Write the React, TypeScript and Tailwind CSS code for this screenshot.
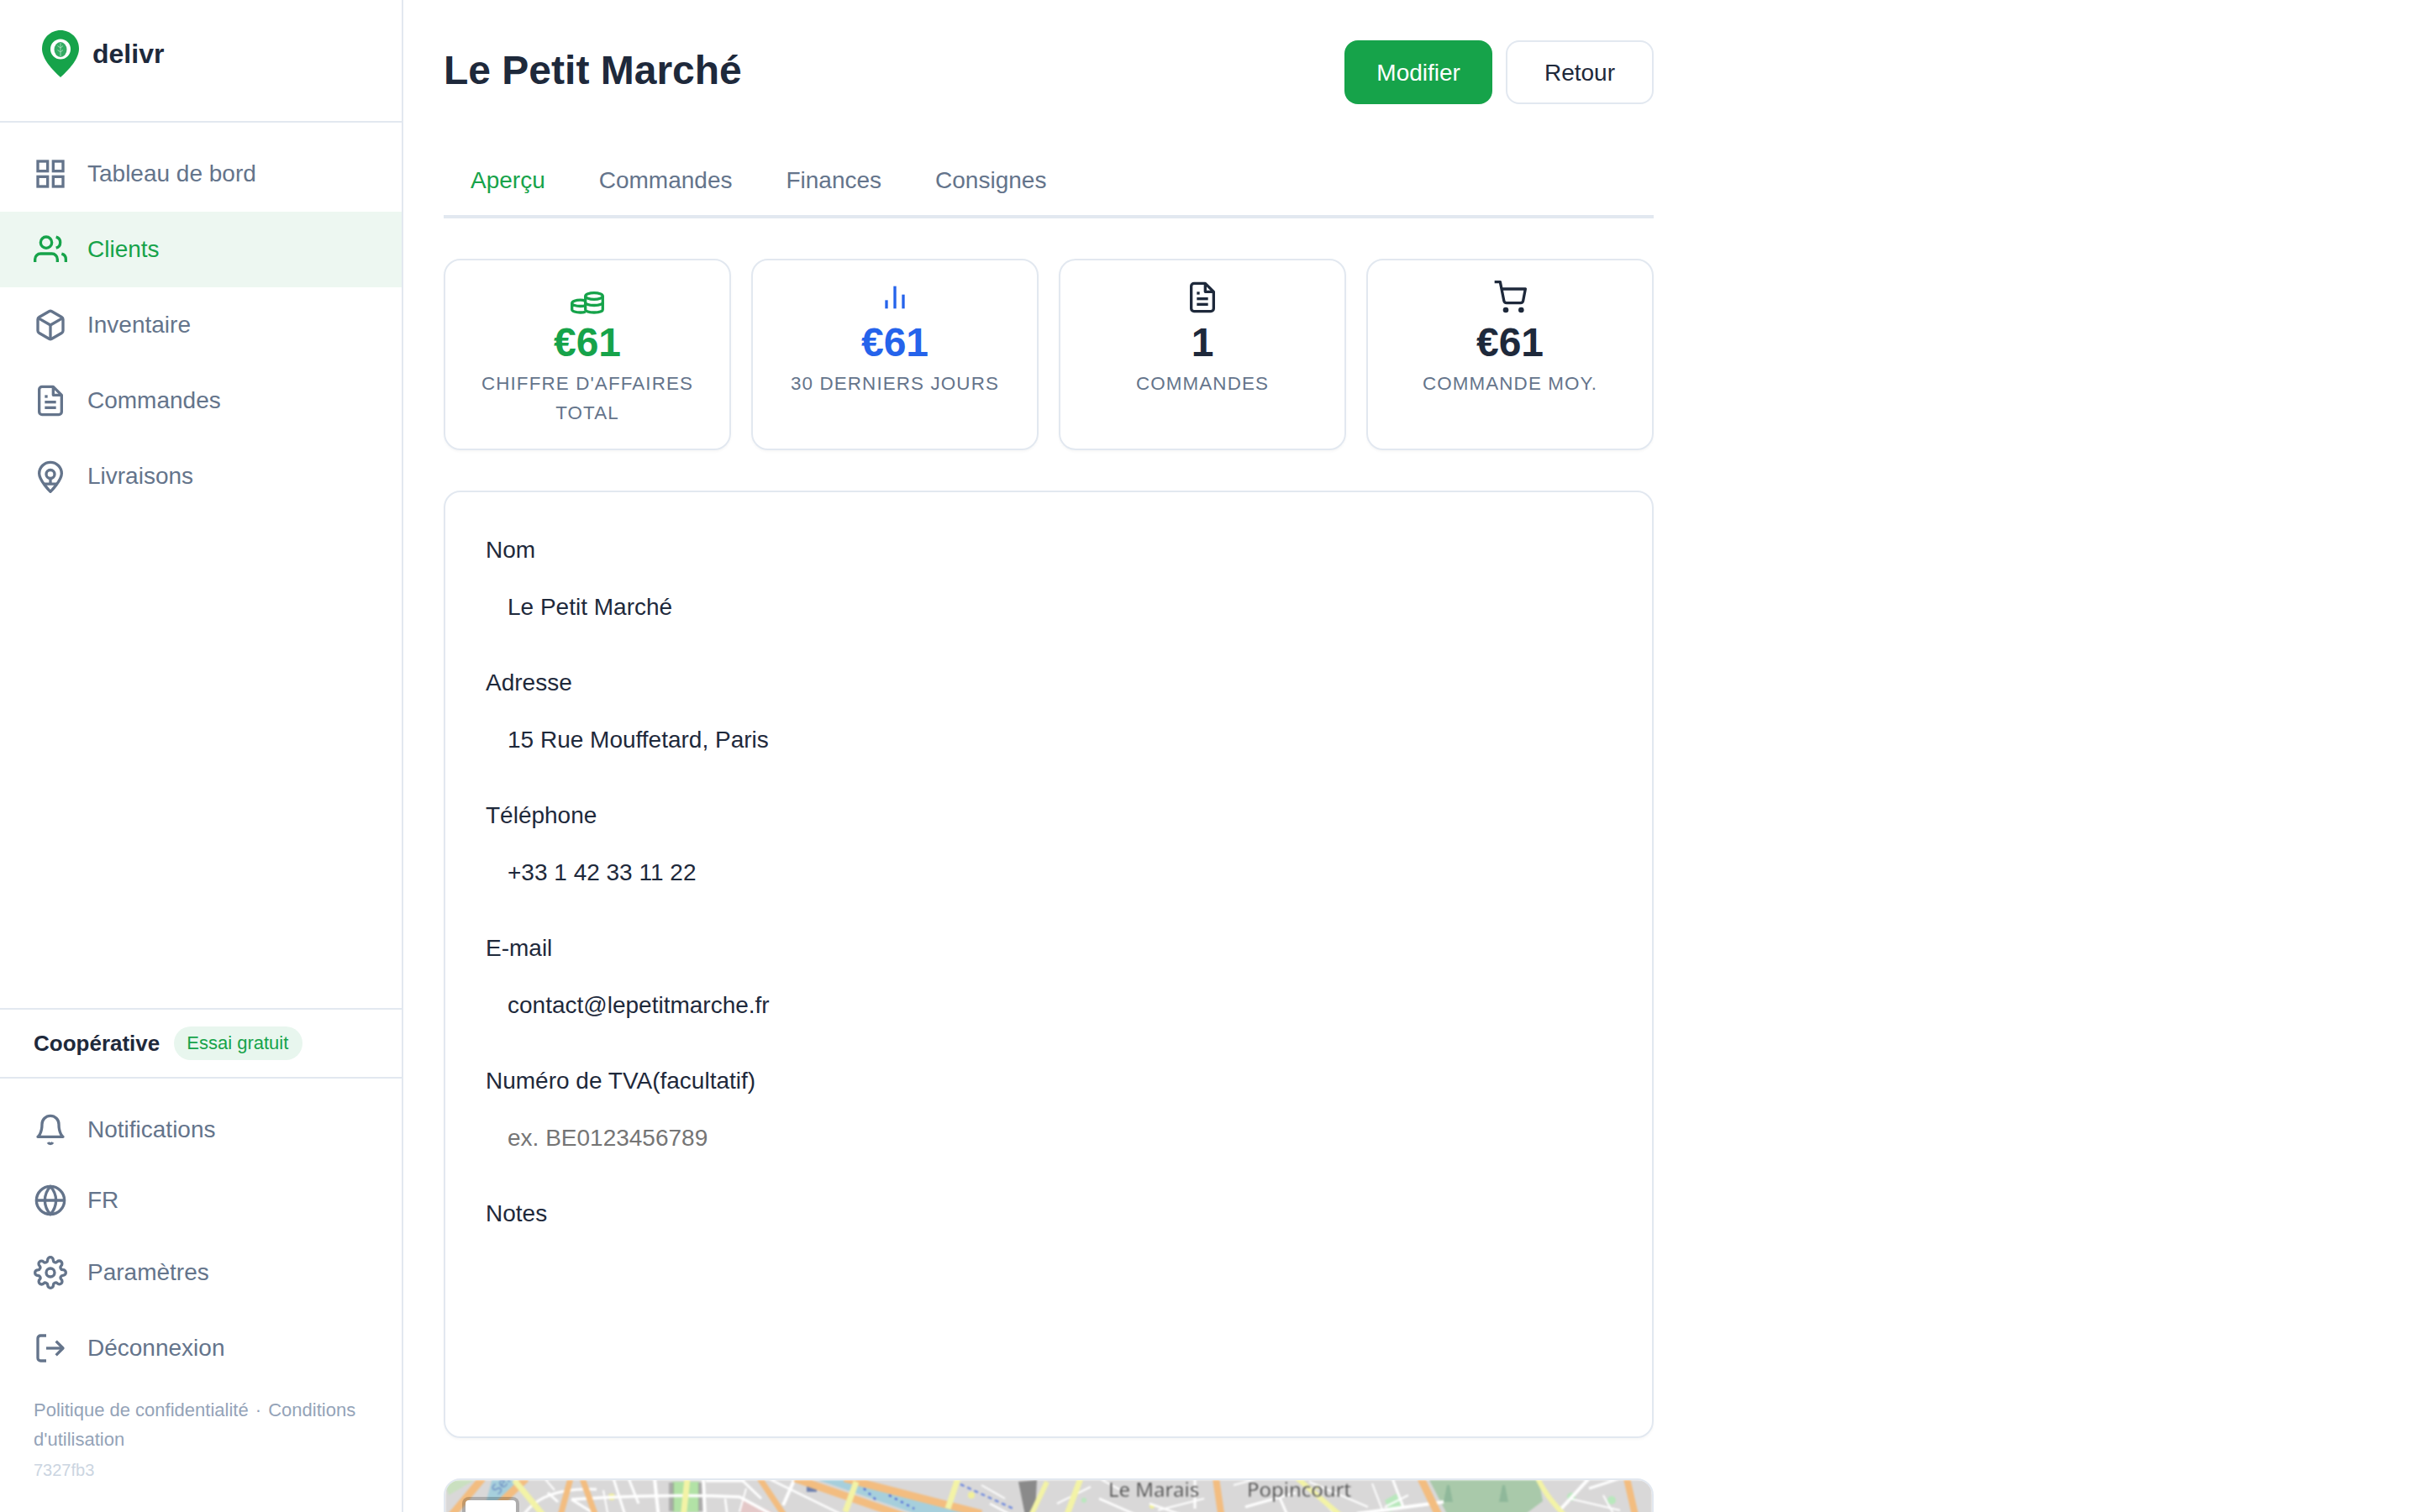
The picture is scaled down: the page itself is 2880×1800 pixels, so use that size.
import type { ReactNode } from "react";

function Ic({ children, className = "" }: { children: ReactNode; className?: string }) {
  return (
    <svg viewBox="0 0 24 24" fill="none" stroke="currentColor" strokeWidth={2} strokeLinejoin="round" className={`w-[40px] h-[40px] shrink-0 ${className}`}>
      {children}
    </svg>
  );
}

const GridI = () => (
  <Ic>
    <g strokeLinejoin="miter">
      <rect x="3" y="3" width="7" height="7" />
      <rect x="14" y="3" width="7" height="7" />
      <rect x="14" y="14" width="7" height="7" />
      <rect x="3" y="14" width="7" height="7" />
    </g>
  </Ic>
);
const UsersI = () => (
  <Ic>
    <path d="M17 21v-2a4 4 0 0 0-4-4H5a4 4 0 0 0-4 4v2" />
    <circle cx="9" cy="7" r="4" />
    <path d="M23 21v-2a4 4 0 0 0-3-3.87" />
    <path d="M16 3.13a4 4 0 0 1 0 7.75" />
  </Ic>
);
const BoxI = () => (
  <Ic>
    <path d="M21 16V8a2 2 0 0 0-1-1.73l-7-4a2 2 0 0 0-2 0l-7 4A2 2 0 0 0 3 8v8a2 2 0 0 0 1 1.73l7 4a2 2 0 0 0 2 0l7-4A2 2 0 0 0 21 16z" />
    <polyline points="3.27 6.96 12 12.01 20.73 6.96" />
    <line x1="12" y1="22.08" x2="12" y2="12" />
  </Ic>
);
const FileI = () => (
  <Ic>
    <path d="M14 2H6a2 2 0 0 0-2 2v16a2 2 0 0 0 2 2h12a2 2 0 0 0 2-2V8z" />
    <polyline points="14 2 14 8 20 8" />
    <line x1="16" y1="13" x2="8" y2="13" />
    <line x1="16" y1="17" x2="8" y2="17" />
    <polyline points="10 9 9 9 8 9" />
  </Ic>
);
const PinI = () => (
  <Ic>
    <path d="M20 10c0 5-8 13-8 13s-8-8-8-13a8 8 0 0 1 16 0z" />
    <circle cx="12" cy="10.5" r="3" />
    <path d="M12 13.5v4M7.5 17.5h9" />
  </Ic>
);
const BellI = () => (
  <Ic>
    <path d="M18 8A6 6 0 0 0 6 8c0 7-3 9-3 9h18s-3-2-3-9" />
    <path d="M13.73 21a2 2 0 0 1-3.46 0" />
  </Ic>
);
const GlobeI = () => (
  <Ic>
    <circle cx="12" cy="12" r="10" />
    <line x1="2" y1="12" x2="22" y2="12" />
    <path d="M12 2a15.3 15.3 0 0 1 4 10 15.3 15.3 0 0 1-4 10 15.3 15.3 0 0 1-4-10 15.3 15.3 0 0 1 4-10z" />
  </Ic>
);
const GearI = () => (
  <Ic>
    <circle cx="12" cy="12" r="3" />
    <path d="M19.4 15a1.65 1.65 0 0 0 .33 1.82l.06.06a2 2 0 0 1 0 2.83 2 2 0 0 1-2.83 0l-.06-.06a1.65 1.65 0 0 0-1.82-.33 1.65 1.65 0 0 0-1 1.51V21a2 2 0 0 1-2 2 2 2 0 0 1-2-2v-.09A1.65 1.65 0 0 0 9 19.4a1.65 1.65 0 0 0-1.82.33l-.06.06a2 2 0 0 1-2.83 0 2 2 0 0 1 0-2.83l.06-.06a1.65 1.65 0 0 0 .33-1.82 1.65 1.65 0 0 0-1.51-1H3a2 2 0 0 1-2-2 2 2 0 0 1 2-2h.09A1.65 1.65 0 0 0 4.6 9a1.65 1.65 0 0 0-.33-1.82l-.06-.06a2 2 0 0 1 0-2.83 2 2 0 0 1 2.83 0l.06.06a1.65 1.65 0 0 0 1.82.33H9a1.65 1.65 0 0 0 1-1.51V3a2 2 0 0 1 2-2 2 2 0 0 1 2 2v.09a1.65 1.65 0 0 0 1 1.51 1.65 1.65 0 0 0 1.82-.33l.06-.06a2 2 0 0 1 2.83 0 2 2 0 0 1 0 2.83l-.06.06a1.65 1.65 0 0 0-.33 1.82V9a1.65 1.65 0 0 0 1.51 1H21a2 2 0 0 1 2 2 2 2 0 0 1-2 2h-.09a1.65 1.65 0 0 0-1.51 1z" />
  </Ic>
);
const LogoutI = () => (
  <Ic>
    <path d="M9 21H5a2 2 0 0 1-2-2V5a2 2 0 0 1 2-2h4" />
    <polyline points="16 17 21 12 16 7" />
    <line x1="21" y1="12" x2="9" y2="12" />
  </Ic>
);
const CartI = () => (
  <Ic>
    <circle cx="9" cy="21" r="1" />
    <circle cx="20" cy="21" r="1" />
    <path d="M1 1h4l2.68 13.39a2 2 0 0 0 2 1.61h9.72a2 2 0 0 0 2-1.61L23 6H6" />
  </Ic>
);
const BarsI = () => (
  <Ic>
    <line x1="18" y1="20" x2="18" y2="10" />
    <line x1="12" y1="20" x2="12" y2="4" />
    <line x1="6" y1="20" x2="6" y2="14" />
  </Ic>
);
const CoinsI = () => (
  <svg viewBox="0 0 40 40" fill="none" stroke="currentColor" strokeWidth={3.3} className="w-[40px] h-[40px] shrink-0">
    <ellipse cx="28" cy="18.500" rx="10.300" ry="3.800" />
    <path d="M17.700 18.500v16c0 2 4.600 3.500 10.300 3.500s10.300-1.500 10.300-3.500v-16" />
    <path d="M17.700 26c0 2 4.600 3.500 10.300 3.500s10.300-1.500 10.300-3.500" />
    <path d="M17.700 24.500c-1.500-.8-3.500-1.300-6-1.300-5.500 0-10 1.700-10 3.800v7.500c0 2 4.500 3.500 10 3.500 2.300 0 4.400-.3 6-.8M1.700 27c0 2 4.500 3.500 10 3.500 2.300 0 4.400-.3 6-.8" />
  </svg>
);

const Logo = () => (
  <svg viewBox="0 0 44 56" className="w-[44px] h-[56px] shrink-0">
    <path d="M22 0C10 0 0 9.500 0 22c0 12 12 25 22 34C32 47 44 34 44 22 44 9.500 34 0 22 0z" fill="#16a34a" />
    <circle cx="22" cy="22.500" r="12" fill="#fff" />
    <ellipse cx="22" cy="23" rx="7.500" ry="9" fill="#33ab62" />
    <path d="M22 15v16M22 21l-3.500-2.500M22 21l3-2.500M22 26l-3.500-2.500M22 26l3-2.500" stroke="#a5e0bc" strokeWidth={0.9} fill="none" />
  </svg>
);

function NavRow({ icon, label, active = false, h = "h-[90px]" }: { icon: ReactNode; label: string; active?: boolean; h?: string }) {
  return (
    <div className={`flex items-center gap-[24px] px-[40px] text-[28px] ${h} ${active ? "bg-[#edf7f1] text-[#16a34a]" : "text-[#64748b]"}`}>
      {icon}
      <span>{label}</span>
    </div>
  );
}

function Stat({ icon, value, label, color }: { icon: ReactNode; value: string; label: string; color: string }) {
  return (
    <div className="h-[228px] rounded-[20px] border-2 border-[#e2e8f0] shadow-[0_2px_3px_rgba(0,0,0,0.03)] flex flex-col items-center px-[32px] pt-[24px] text-center">
      <div className={color}>{icon}</div>
      <div className={`text-[48px] font-bold leading-[70px] mb-[-4px] mt-[-1px] ${color}`}>{value}</div>
      <div className="text-[22.4px] tracking-[1.12px] leading-[34.600px] text-[#64748b] pt-[1px]">{label}</div>
    </div>
  );
}

function Field({ label, value, placeholder }: { label: string; value?: string; placeholder?: string }) {
  return (
    <div className="mb-[30px]">
      <div className="text-[28px] leading-[42px] text-[#1e293b]">{label}</div>
      <input
        readOnly
        defaultValue={value}
        placeholder={placeholder}
        aria-label={label}
        className="mt-[8px] block w-full h-[78px] px-[26px] text-[28px] text-[#1e293b] outline-none placeholder:text-[#757575] bg-white"
      />
    </div>
  );
}

const orange: [string, number][] = [
  ["M46 0L6 48", 9],
  ["M98 0L48 48", 9],
  ["M151 0L138 48", 7],
  ["M165 0L182 48", 7],
  ["M376 0L408 48", 7],
  ["M418 0L556 48", 9],
  ["M477 0L640 42", 9],
  ["M919 0L926 48", 8],
  ["M1163 0L1186 48", 9],
  ["M1408 0L1419 48", 8],
];
const yellow: [string, number][] = [
  ["M84 2L122 48", 7],
  ["M290 0L285 48", 7],
  ["M491 4L478 40", 7],
  ["M612 0L600 36", 7],
  ["M718 4L697 48", 6],
  ["M758 0L740 48", 7],
  ["M1016 0L1072 48", 6],
  ["M1302 0Q1312 22 1338 48", 6],
];
const white: [string, number][] = [
  ["M96 42Q120 10 182 13", 3],
  ["M124 17L136 28", 3],
  ["M202 0L216 44", 3],
  ["M220 0L232 30", 3],
  ["M251 0L256 48", 4],
  ["M152 25L186 46", 3],
  ["M152 25Q260 18 352 22L396 46", 3.5],
  ["M309 0L311 48", 4],
  ["M312 3L358 3", 3],
  ["M356 3L378 24", 3],
  ["M418 0L404 32", 4],
  ["M386 0L476 44", 2.5],
  ["M335 24L338 48", 2.5],
  ["M894 0L894 36", 3],
  ["M954 34L1014 17", 3],
  ["M995 23L1005 46", 3],
  ["M1129 0L1142 34", 3],
  ["M1087 42L1190 28", 4],
  ["M1363 0L1330 36", 4],
  ["M1363 12L1400 0", 3],
  ["M780 24L830 46", 2.5],
  ["M840 30L880 44", 2.5],
  ["M650 30L680 46", 2.5],
  ["M120 0L132 14", 2],
  ["M190 14L196 46", 2],
  ["M360 12L352 40", 2],
  ["M640 8L668 24", 2],
  ["M730 30L770 10", 2],
  ["M780 0L806 14", 2],
  ["M850 38L905 24", 2],
  ["M940 8L970 0", 2],
  ["M1030 4L1100 34", 2],
  ["M1040 20L1058 40", 2],
  ["M1105 6L1118 40", 2],
  ["M1148 20L1120 34", 2],
  ["M1340 24L1400 38", 2],
  ["M1380 20L1392 42", 2],
];

function MapArt() {
  return (
    <svg viewBox="2 2 1436 496" className="block w-[1436px] h-[496px] blur-[0.8px]">
      <rect x="0" y="0" width="1440" height="500" fill="#d9d8d8" />
      <path d="M58 0L92 0L60 30L50 30z" fill="#a6cfdc" />
      <path d="M440 0L477 0L640 42L590 52z" fill="#a6cfdc" />
      <path d="M432 4h12v12h-12z" fill="#6d80b0" />
      <path d="M500 12L515 26M530 20L560 36" stroke="#3f55d8" strokeWidth={2} strokeDasharray="3 5" />
      <path d="M615 7L680 37" stroke="#5a7ae0" strokeWidth={2} strokeDasharray="5 4" />
      <path d="M1172 0L1303 0L1308 27L1280 48L1197 48z" fill="#a9c9aa" />
      <path d="M1190 28l4-20h3l4 20zM1256 28l4-20h3l4 20z" fill="#8fb89a" />
      <path d="M272 4h32v36h-32z" fill="#b2e2a6" />
      <path d="M303 5h8v34h-8zM268 5h6v34h-6z" fill="#8f8f8f" opacity="0.6" />
      <path d="M354 24L392 40V48H354z" fill="#e4c8c8" />
      <path d="M684 4L706 2L704 40L692 44z" fill="#8a8a8a" />
      <path d="M1120 26L1134 18L1140 34L1126 40z" fill="#b9e8bd" />
      <path d="M0 0h40L6 20z" fill="#bfe6b0" opacity="0.6" />
      <circle cx="200" cy="22" r="4" fill="#f1f09a" />
      <circle cx="628" cy="20" r="4" fill="#f1f09a" />
      <circle cx="843" cy="33" r="3" fill="#f1f09a" />
      <circle cx="1342" cy="22" r="5" fill="#b9e8bd" />
      <circle cx="1390" cy="26" r="5" fill="#b9e8bd" />
      <circle cx="1040" cy="10" r="3" fill="#f1f09a" />
      <circle cx="762" cy="26" r="3" fill="#b9e8bd" />
      {white.map(([d, w]) => (
        <path key={d} d={d} stroke="#ffffff" strokeWidth={w} fill="none" />
      ))}
      {orange.map(([d, w]) => (
        <path key={d} d={d} stroke="#f3bd80" strokeWidth={w} fill="none" />
      ))}
      {yellow.map(([d, w]) => (
        <path key={d} d={d} stroke="#f3f3a6" strokeWidth={w} fill="none" />
      ))}
      <text x="65" y="20" fontSize="17" fill="#6f8fc4" fontFamily="'Noto Sans',sans-serif" transform="rotate(-50 65 20)">Seine</text>
      <text x="791" y="22" fontSize="24" fill="#3f3f3f" stroke="#ffffff" strokeOpacity={0.5} strokeWidth={0.5} fontFamily="'Noto Sans',sans-serif">Le Marais</text>
      <text x="956" y="22" fontSize="24" fill="#3f3f3f" stroke="#ffffff" strokeOpacity={0.5} strokeWidth={0.5} fontFamily="'Noto Sans',sans-serif">Popincourt</text>
    </svg>
  );
}

export default function App() {
  return (
    <div className="flex w-[2880px] h-[1800px] overflow-hidden bg-white text-[#1e293b] [font-family:'Liberation_Sans',Arial,sans-serif]">
      <aside className="w-[480px] h-full shrink-0 border-r-2 border-[#e2e8f0] flex flex-col">
        <div className="h-[146px] border-b-2 border-[#e2e8f0] pl-[50px] pt-[36px]">
          <div className="flex items-center gap-[16px] h-[56px]">
            <Logo />
            <span className="text-[32px] font-bold text-[#1e293b]">delivr</span>
          </div>
        </div>
        <nav className="flex-1 pt-[16px]">
          <NavRow icon={<GridI />} label="Tableau de bord" />
          <NavRow icon={<UsersI />} label="Clients" active />
          <NavRow icon={<BoxI />} label="Inventaire" />
          <NavRow icon={<FileI />} label="Commandes" />
          <NavRow icon={<PinI />} label="Livraisons" />
        </nav>
        <div className="h-[84px] border-y-2 border-[#e2e8f0] flex items-center gap-[17px] px-[40px]">
          <span className="text-[26px] font-bold text-[#1e293b]">Coopérative</span>
          <span className="h-[40px] rounded-full bg-[#e8f6ee] pl-[15px] pr-[17px] pb-[1px] flex items-center text-[22px] text-[#16a34a]">Essai gratuit</span>
        </div>
        <div className="h-[516px] pt-[18px]">
          <NavRow icon={<BellI />} label="Notifications" h="h-[85px]" />
          <NavRow icon={<GlobeI />} label="FR" h="h-[84px]" />
          <NavRow icon={<GearI />} label="Paramètres" h="h-[87px]" />
          <NavRow icon={<LogoutI />} label="Déconnexion" h="h-[94px]" />
          <div className="px-[40px] mt-[10px]">
            <div className="text-[22px] leading-[34.600px] text-[#94a3b8]">
              Politique de confidentialité <span className="mx-[2px]">·</span> Conditions d'utilisation
            </div>
            <div className="mt-[4px] text-[20px] leading-[30px] text-[#cbd5e1]">7327fb3</div>
          </div>
        </div>
      </aside>
      <main className="flex-1 h-full overflow-hidden pl-[48px] pt-[48px]">
        <div className="w-[1440px]">
          <div className="flex items-start justify-between">
            <h1 className="text-[48px] font-bold leading-[72px] text-[#1e293b]">Le Petit Marché</h1>
            <div className="flex gap-[16px]">
              <button className="h-[76px] px-[38px] pt-[1px] rounded-[16px] bg-[#16a34a] text-white text-[28px]">Modifier</button>
              <button className="h-[76px] px-[44px] pt-[1px] rounded-[16px] border-2 border-[#e2e8f0] text-[#1e293b] text-[28px]">Retour</button>
            </div>
          </div>
          <div className="mt-[50px] flex border-b-4 border-[#e2e8f0] text-[28px] leading-[42px] text-[#64748b]">
            <div className="px-[32px] pt-[20px] pb-[20px] text-[#16a34a]">Aperçu</div>
            <div className="px-[32px] pt-[20px] pb-[20px]">Commandes</div>
            <div className="px-[32px] pt-[20px] pb-[20px]">Finances</div>
            <div className="px-[32px] pt-[20px] pb-[20px]">Consignes</div>
          </div>
          <div className="mt-[48px] grid grid-cols-4 gap-[24px]">
            <Stat icon={<CoinsI />} value="€61" label="CHIFFRE D'AFFAIRES TOTAL" color="text-[#16a34a]" />
            <Stat icon={<BarsI />} value="€61" label="30 DERNIERS JOURS" color="text-[#2563eb]" />
            <Stat icon={<FileI />} value="1" label="COMMANDES" color="text-[#1e293b]" />
            <Stat icon={<CartI />} value="€61" label="COMMANDE MOY." color="text-[#1e293b]" />
          </div>
          <div className="mt-[48px] h-[1128px] rounded-[20px] border-2 border-[#e2e8f0] shadow-[0_2px_3px_rgba(0,0,0,0.03)] px-[48px] pt-[48px]">
            <Field label="Nom" value="Le Petit Marché" />
            <Field label="Adresse" value="15 Rue Mouffetard, Paris" />
            <Field label="Téléphone" value="+33 1 42 33 11 22" />
            <Field label="E-mail" value="contact@lepetitmarche.fr" />
            <Field label="Numéro de TVA(facultatif)" placeholder="ex. BE0123456789" />
            <div>
              <div className="text-[28px] leading-[42px] text-[#1e293b]">Notes</div>
              <textarea readOnly aria-label="Notes" className="mt-[8px] block w-full h-[188px] outline-none resize-none bg-white" />
            </div>
          </div>
          <div className="relative mt-[48px] h-[500px] rounded-[20px] border-2 border-[#e2e8f0] overflow-hidden">
            <MapArt />
            <div className="absolute left-[20px] top-[20px] w-[68px] h-[120px] rounded-[8px] border-4 border-[rgba(0,0,0,0.2)] bg-clip-padding bg-white" />
          </div>
        </div>
      </main>
    </div>
  );
}
